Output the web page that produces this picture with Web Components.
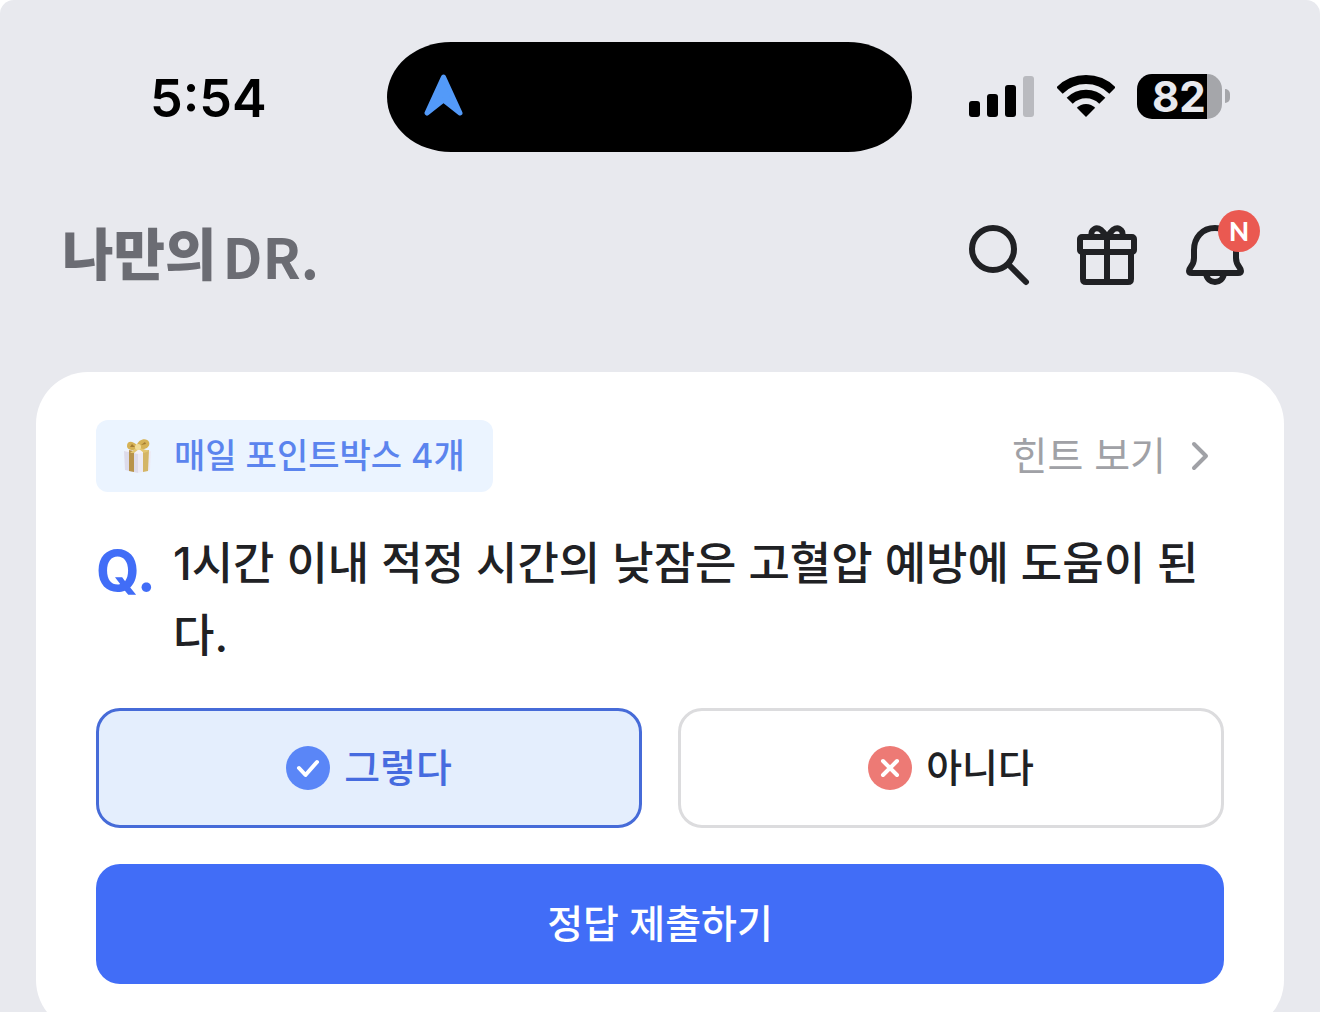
<!DOCTYPE html>
<html lang="ko">
<head>
<meta charset="UTF-8">
<meta name="viewport" content="width=device-width, initial-scale=1">
<title>나만의 DR.</title>
<style>
  html { background: #fff; scrollbar-width: none; }
  body { margin: 0; font-family: Inter, "Noto Sans CJK KR", sans-serif; color: #202124; }
</style>
</head>
<body>
<app-screen>
  <status-bar slot="status" time="5:54" battery="82"></status-bar>
  <app-header slot="header">나만의 <span slot="mark">DR.</span></app-header>
  <quiz-card>
    <point-badge slot="badge">매일 포인트박스 4개</point-badge>
    <hint-link slot="hint" href="#hint">힌트 보기</hint-link>
    <span slot="question">1시간 이내 적정 시간의 낮잠은 고혈압 예방에 도움이 된다.</span>
    <quiz-choices slot="choices"></quiz-choices>
    <submit-button slot="submit">정답 제출하기</submit-button>
  </quiz-card>
</app-screen>

<script>
class AppScreen extends HTMLElement {
  connectedCallback() {
    this.attachShadow({ mode: 'open' });
    this.shadowRoot.innerHTML = `
      <style>
        :host { display: block; min-height: 100vh; background: #e8e9ee; border-radius: 14px 14px 0 0; }
        main { padding: 0 36px 36px; }
      </style>
      <slot name="status"></slot>
      <slot name="header"></slot>
      <main><slot></slot></main>
    `;
  }
}
customElements.define('app-screen', AppScreen);

class StatusBar extends HTMLElement {
  connectedCallback() {
    this.attachShadow({ mode: 'open' });
    this.shadowRoot.innerHTML = `
      <style>
        :host { display: grid; grid-template-columns: 1fr 525px 1fr; align-items: center; padding: 42px 90px 0 69px; color: #000; }
        time { padding: 4px 0 0 81px; font-size: 52px; line-height: 64px; font-weight: 600; }
        .island { height: 110px; box-sizing: border-box; padding: 32px 0 0 37px; background: #000; border-radius: 64px / 55px; }
        .icons { display: flex; justify-content: flex-end; align-items: center; gap: 22px; padding-bottom: 2px; }
        svg { display: block; flex: none; }
        .battery { display: flex; align-items: center; gap: 3px; }
        .level { width: 85px; height: 45px; box-sizing: border-box; padding-left: 15px; border-radius: 15px; background: linear-gradient(to right, #000 70px, #a5a6aa 70px); color: #e8e9ee; font-size: 42px; line-height: 45px; font-weight: 700; }
        .tip { width: 5px; height: 14px; border-radius: 0 5px 5px 0; background: #a5a6aa; }
      </style>
      <time>${this.getAttribute('time')}</time>
      <div class="island">
        <svg width="40" height="42" viewBox="0 0 40 42"><path d="M19.500 3 L36 39 L19.500 26 L3 39 Z" fill="#539af9" stroke="#539af9" stroke-width="5" stroke-linejoin="round"/></svg>
      </div>
      <div class="icons">
        <svg width="66" height="42" viewBox="0 0 66 42">
          <rect x="0" y="26" width="11" height="16" rx="3"/>
          <rect x="18" y="19" width="11" height="23" rx="3"/>
          <rect x="36" y="10" width="11" height="32" rx="3"/>
          <rect x="54" y="1" width="11" height="41" rx="3" fill="#b9babf"/>
        </svg>
        <svg width="58" height="42" viewBox="0 0 58 42">
          <g fill="none" stroke="#000">
            <path d="M2.500 15.500 A37.500 37.500 0 0 1 55.500 15.500" stroke-width="9"/>
            <path d="M12.700 25.700 A23 23 0 0 1 45.300 25.700" stroke-width="8.600"/>
          </g>
          <path d="M29 42 L19.800 32.800 A13 13 0 0 1 38.200 32.800 Z"/>
        </svg>
        <div class="battery"><div class="level">${this.getAttribute('battery')}</div><div class="tip"></div></div>
      </div>
    `;
  }
}
customElements.define('status-bar', StatusBar);

class AppHeader extends HTMLElement {
  connectedCallback() {
    this.attachShadow({ mode: 'open' });
    this.shadowRoot.innerHTML = `
      <style>
        :host { display: flex; justify-content: space-between; align-items: center; padding: 67px 69px 81px 62px; }
        h1 { display: flex; gap: 6px; margin: 0; font-size: 56px; line-height: 72px; font-weight: 900; color: #6b6c73; }
        .mark { font-family: "Noto Sans CJK KR", sans-serif; font-weight: 700; }
        nav { display: flex; gap: 36px; }
        button { position: relative; width: 72px; height: 72px; padding: 0; border: 0; background: none; color: #202124; cursor: pointer; }
        svg { display: block; }
        /* unread marker over the bell */
        .new { position: absolute; right: -9px; top: -9px; width: 42px; height: 42px; border-radius: 50%; background: #ea5951; color: #fff; font: 900 26px/42px Lato, sans-serif; }
      </style>
      <h1><span><slot></slot></span><span class="mark"><slot name="mark"></slot></span></h1>
      <nav>
        <button aria-label="검색">
          <svg width="72" height="72" viewBox="0 0 72 72" fill="none" stroke="currentColor" stroke-width="6" stroke-linecap="round">
            <circle cx="30" cy="30" r="21"/><path d="M46 46 L63 63"/>
          </svg>
        </button>
        <button aria-label="선물">
          <svg width="72" height="72" viewBox="0 0 72 72" fill="none" stroke="currentColor" stroke-width="6" stroke-linejoin="round">
            <rect x="9" y="18" width="54" height="15" rx="2"/>
            <path d="M12 33 V60 Q12 63 15 63 H57 Q60 63 60 60 V33"/>
            <path d="M36 18 V63"/>
            <path d="M21 18 C18 10 27 6 32 13 L37 19 M51 18 C54 10 45 6 40 13 L35 19"/>
          </svg>
        </button>
        <button aria-label="알림">
          <svg width="72" height="72" viewBox="0 0 72 72" fill="none" stroke="currentColor" stroke-width="6" stroke-linejoin="round">
            <path d="M36 9 C23 9 15 19 15 31 V39 C15 47 10 48 10 52 Q10 54 13 54 H59 Q62 54 62 52 C62 48 57 47 57 39 V31 C57 19 49 9 36 9 Z"/>
            <path d="M27 54 C28 66 44 66 45 54"/>
          </svg>
          <span class="new">N</span>
        </button>
      </nav>
    `;
  }
}
customElements.define('app-header', AppHeader);

class QuizCard extends HTMLElement {
  connectedCallback() {
    this.attachShadow({ mode: 'open' });
    this.shadowRoot.innerHTML = `
      <style>
        :host { display: flex; flex-direction: column; gap: 36px; padding: 48px 60px; background: #fff; border-radius: 52px; }
        .top { display: flex; justify-content: space-between; align-items: center; }
        .question { display: grid; grid-template-columns: 77px 1fr; }
        .mark { font-size: 56px; line-height: 86px; height: 86px; font-weight: 700; color: #416df7; }
        h2 { margin: 0; font-size: 45px; line-height: 72px; font-weight: 500; }
      </style>
      <div class="top"><slot name="badge"></slot><slot name="hint"></slot></div>
      <div class="question"><span class="mark">Q.</span><h2><slot name="question"></slot></h2></div>
      <slot name="choices"></slot>
      <slot name="submit"></slot>
    `;
  }
}
customElements.define('quiz-card', QuizCard);

class PointBadge extends HTMLElement {
  connectedCallback() {
    this.attachShadow({ mode: 'open' });
    this.shadowRoot.innerHTML = `
      <style>
        :host { display: flex; align-items: center; gap: 22px; padding: 0 28px; border-radius: 12px; background: #ebf4ff; color: #5b84ee; font-size: 34px; line-height: 72px; font-weight: 500; }
      </style>
      <svg width="28" height="36" viewBox="0 0 28 36">
        <path d="M0 13 L14 14 V35 L1 32 Z" fill="#dddbea"/>
        <path d="M14 14 L27 13 L26 32 L14 35 Z" fill="#eceaf5"/>
        <path d="M0 13 L13 10 L27 13 L14 16 Z" fill="#f3f1f8"/>
        <path d="M5 12 L10 13 V34 L5 33 Z" fill="#b8934a"/>
        <path d="M19 13 L25 12 L24 33 L19 34 Z" fill="#d4b566"/>
        <path d="M14 11 C9 13 3 12 3 8 C3 2 9 3 13 7 C14 1 23 -1 25 4 C27 9 20 13 14 11 Z" fill="#d6b255"/>
        <path d="M11 9 L6 9 L8 6 Z M17 7 L21 4 L22 6 Z" fill="#a47c33"/>
        <path d="M13 9 L6 15 L10 15 L15 11 L20 15 L25 13 Z" fill="#e3c672"/>
        <circle cx="14" cy="9" r="3" fill="#f1dc98"/>
      </svg>
      <span><slot></slot></span>
    `;
  }
}
customElements.define('point-badge', PointBadge);

class HintLink extends HTMLElement {
  connectedCallback() {
    this.attachShadow({ mode: 'open' });
    this.shadowRoot.innerHTML = `
      <style>
        :host { display: block; }
        a { display: flex; align-items: center; gap: 24px; padding-right: 14px; color: #a0a1a6; text-decoration: none; font-size: 39px; line-height: 72px; }
      </style>
      <a href="${this.getAttribute('href')}"><span><slot></slot></span>
        <svg width="20" height="30" viewBox="0 0 20 30" fill="none" stroke="currentColor" stroke-width="4" stroke-linecap="round" stroke-linejoin="round"><path d="M4 3 L16 15 L4 27"/></svg>
      </a>
    `;
  }
}
customElements.define('hint-link', HintLink);

class QuizChoices extends HTMLElement {
  connectedCallback() {
    this.attachShadow({ mode: 'open' });
    this.shadowRoot.innerHTML = `
      <style>
        :host { display: block; }
        .group { display: grid; grid-template-columns: 1fr 1fr; gap: 36px; }
        label { display: flex; justify-content: center; align-items: center; gap: 14px; height: 120px; box-sizing: border-box; border: 3px solid #dcdcde; border-radius: 24px; cursor: pointer; font-size: 39px; line-height: 60px; font-weight: 500; }
        label:has(input:checked) { border-color: #466bd8; background: #e4eefd; color: #466bdf; }
        label:focus-within { border-color: #466bd8; }
        input { appearance: none; position: absolute; width: 0; height: 0; margin: 0; opacity: 0; }
        svg { flex: none; }
      </style>
      <div class="group" role="radiogroup" aria-label="답 선택">
        <label><input type="radio" name="answer" value="yes" checked>
          <svg width="44" height="44" viewBox="0 0 44 44"><circle cx="22" cy="22" r="22" fill="#5a86f7"/><path d="M13 22 L19.500 29 L31 16" fill="none" stroke="#fff" stroke-width="4" stroke-linecap="round" stroke-linejoin="round"/></svg>
          <span>그렇다</span>
        </label>
        <label><input type="radio" name="answer" value="no">
          <svg width="44" height="44" viewBox="0 0 44 44"><circle cx="22" cy="22" r="22" fill="#ed7a75"/><path d="M15 15 L29 29 M29 15 L15 29" fill="none" stroke="#fff" stroke-width="4" stroke-linecap="round"/></svg>
          <span>아니다</span>
        </label>
      </div>
    `;
  }
}
customElements.define('quiz-choices', QuizChoices);

class SubmitButton extends HTMLElement {
  connectedCallback() {
    this.attachShadow({ mode: 'open' });
    this.shadowRoot.innerHTML = `
      <style>
        :host { display: block; }
        button { width: 100%; height: 120px; padding: 0; border: 0; border-radius: 24px; background: #416df7; color: #fff; font-family: inherit; font-size: 39px; line-height: 60px; font-weight: 500; cursor: pointer; }
      </style>
      <button type="button"><slot></slot></button>
    `;
  }
}
customElements.define('submit-button', SubmitButton);
</script>
</body>
</html>
